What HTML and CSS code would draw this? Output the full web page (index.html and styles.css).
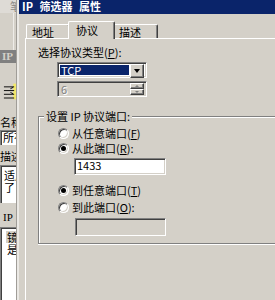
FILE: index.html
```html
<!DOCTYPE html>
<html>
<head>
<meta charset="utf-8">
<link rel="stylesheet" href="styles.css">
</head>
<body>
<div class="screen">
  <div class="bgwin">
    <div class="bg-top"><span class="bg-glyph">笔</span></div>
    <div class="bg-upper"></div>
    <div class="bg-title">IP</div>
    <div class="bg-body">
      <div class="bg-icon">
        <svg width="14" height="17" viewBox="0 0 14 17">
          <rect x="11" y="0" width="3" height="17" fill="#f2e96a"/>
          <path d="M1 3.5h11M1 7.5h11M1 11.5h11M1 15.5h11" stroke="#000" stroke-width="1"/>
          <path d="M8 5.5l3 -1.5M8 9.5l3 1.5" stroke="#000" stroke-width="1"/>
        </svg>
      </div>
      <div class="bg-label">名称</div>
      <div class="bg-field">所有</div>
      <div class="bg-label lbl2">描述</div>
      <div class="bg-area">适用<br>了</div>
      <div class="bg-label ip">IP</div>
      <div class="bg-list">
        <div class="bg-head">镜</div>
        <div class="bg-row">是</div>
      </div>
    </div>
  </div>
  <div class="edge"></div>
  <div class="dialog">
    <div class="titlebar">IP 筛选器 属性</div>
    <div class="dlg-body">
      <div class="tabs">
        <div class="tab t1">地址</div>
        <div class="tab sel">协议</div>
        <div class="tab t3">描述</div>
      </div>
      <div class="panel">
        <div class="label">选择协议类型(<u>P</u>):</div>
        <div class="combo">
          <div class="combo-sel">TCP</div>
          <div class="btn drop"><span class="tri"></span></div>
        </div>
        <div class="spin">
          <div class="spin-val">6</div>
          <div class="spin-btns">
            <div class="btn sb"><span class="tri-up"></span></div>
            <div class="btn sb"><span class="tri-dn"></span></div>
          </div>
        </div>
        <div class="group">
          <div class="group-title">设置 IP 协议端口:</div>
          <div class="radio-row r1"><span class="radio"></span><span>从任意端口(<u>F</u>)</span></div>
          <div class="radio-row"><span class="radio on"></span><span>从此端口(<u>R</u>):</span></div>
          <div class="field f1">1433</div>
          <div class="radio-row r3"><span class="radio on"></span><span>到任意端口(<u>T</u>)</span></div>
          <div class="radio-row r4"><span class="radio"></span><span>到此端口(<u>O</u>):</span></div>
          <div class="field f2"></div>
        </div>
      </div>
    </div>
  </div>
</div>
</body>
</html>
```

FILE: styles.css
```css
html {
  margin: 0;
  padding: 0;
  overflow: hidden;
}
body {
  margin: 0;
  padding: 0;
  width: 275px;
  height: 300px;
  overflow: hidden;
  background: #d4d0c8;
  font: 11px/13px "Noto Sans CJK SC", sans-serif;
  color: #000;
}
u { text-decoration: underline; text-underline-offset: 1px; }

.screen {
  display: flex;
  width: 275px;
  height: 300px;
  overflow: hidden;
}

/* background window */
.bgwin {
  width: 16px;
  flex: none;
  display: flex;
  flex-direction: column;
  overflow: hidden;
  background: #d4d0c8;
  white-space: nowrap;
}
.bg-top {
  height: 13px;
  background: #dedbd6;
  display: flex;
  overflow: hidden;
}
.bg-glyph {
  margin-left: 10px;
  color: #8c8a86;
  line-height: 13px;
}
.bg-upper {
  height: 37px;
  box-shadow: inset -2px 0 0 #d4d0c8, inset -3px 0 0 #eeece8;
}
.bg-title {
  height: 13px;
  background: #808080;
  color: #d4d0c8;
  font: bold 11px/13px "Liberation Serif", serif;
  padding-left: 2px;
}
.bg-body {
  flex: 1;
  display: flex;
  flex-direction: column;
}
.bg-icon {
  margin: 20px 0 0 3px;
  height: 17px;
  display: flex;
}
.bg-label {
  margin-top: 16px;
  overflow: hidden;
}
.bg-field {
  margin-top: 1px;
  height: 15px;
  box-sizing: border-box;
  background: #fff;
  border-top: 1px solid #808080;
  border-left: 1px solid #808080;
  box-shadow: inset 1px 1px 0 #404040;
  padding-left: 2px;
  line-height: 13px;
  overflow: hidden;
}
.lbl2 { margin-top: 5px; }
.bg-area {
  margin-top: 2px;
  height: 38px;
  box-sizing: border-box;
  background: #fff;
  border-top: 1px solid #808080;
  border-left: 1px solid #808080;
  box-shadow: inset 1px 1px 0 #404040;
  padding: 3px 0 0 3px;
  line-height: 12px;
  overflow: hidden;
}
.bg-label.ip {
  margin-top: 8px;
  font: 11px/13px "Liberation Serif", serif;
  padding-left: 3px;
}
.bg-list {
  margin-top: 3px;
  flex: 1;
  background: #fff;
  border-top: 1px solid #808080;
  border-left: 1px solid #808080;
  box-shadow: inset 1px 1px 0 #404040;
  padding: 2px 0 0 4px;
  display: flex;
  flex-direction: column;
  overflow: hidden;
}
.bg-head {
  height: 13px;
  flex: none;
  box-sizing: border-box;
  background: #d4d0c8;
  border-top: 1px solid #fff;
  border-left: 1px solid #fff;
  padding-left: 1px;
  line-height: 12px;
}
.bg-row {
  padding-left: 2px;
  line-height: 13px;
}

.edge {
  width: 2px;
  flex: none;
  border-left: 1px solid #a09d98;
  background: #ebe9e5;
}

/* dialog */
.dialog {
  flex: 1;
  min-width: 0;
  display: flex;
  flex-direction: column;
  background: #d4d0c8;
  overflow: hidden;
}
.titlebar {
  height: 14px;
  flex: none;
  background: #0a246a;
  color: #fff;
  font-weight: bold;
  line-height: 13px;
  padding-left: 3px;
  white-space: nowrap;
  word-spacing: 4px;
}
.dlg-body {
  flex: 1;
  display: flex;
  flex-direction: column;
  padding-left: 6px;
}
.tabs {
  height: 24px;
  flex: none;
  display: flex;
  align-items: flex-end;
  padding-left: 1px;
}
.tab {
  box-sizing: border-box;
  height: 14px;
  border-top: 1px solid #fff;
  border-left: 1px solid #fff;
  border-right: 1px solid #404040;
  box-shadow: inset -1px 0 0 #808080;
  border-radius: 2px 2px 0 0;
  line-height: 13px;
  padding-top: 1px;
  white-space: nowrap;
  background: #d4d0c8;
}
.t1 { width: 44px; padding-left: 5px; }
.t3 { width: 45px; padding-left: 5px; }
.tab.sel {
  width: 47px;
  height: 18px;
  margin: 0 -2px -1px -2px;
  padding-left: 7px;
  padding-top: 2px;
  position: relative;
  z-index: 1;
}
.panel {
  flex: 1;
  border-top: 1px solid #fff;
  border-left: 1px solid #fff;
  display: flex;
  flex-direction: column;
  align-items: flex-start;
}
.label {
  margin: 7px 0 0 12px;
  white-space: nowrap;
}

.combo, .spin, .field {
  box-sizing: border-box;
  border-top: 1px solid #808080;
  border-left: 1px solid #808080;
  border-bottom: 1px solid #fff;
  border-right: 1px solid #fff;
  box-shadow: inset 1px 1px 0 #404040, inset -1px -1px 0 #d4d0c8;
}
.combo {
  margin: 3px 0 0 31px;
  width: 90px;
  height: 16px;
  flex: none;
  background: #fff;
  padding: 2px;
  display: flex;
}
.combo-sel {
  flex: 1;
  background: #0a246a;
  color: #fff;
  line-height: 11px;
  padding-left: 1px;
  margin-right: 1px;
}
.btn {
  box-sizing: border-box;
  background: #d4d0c8;
  border-top: 1px solid #fff;
  border-left: 1px solid #fff;
  border-right: 1px solid #404040;
  border-bottom: 1px solid #404040;
  box-shadow: inset -1px -1px 0 #808080;
  display: flex;
  align-items: center;
  justify-content: center;
}
.drop {
  width: 14px;
  height: 14px;
  margin: -1px 0;
}
.tri {
  width: 0;
  height: 0;
  border-left: 3.5px solid transparent;
  border-right: 3.5px solid transparent;
  border-top: 4px solid #000;
}
.spin {
  margin: 3px 0 0 31px;
  width: 90px;
  height: 16px;
  flex: none;
  background: #d4d0c8;
  padding: 2px;
  display: flex;
}
.spin-val {
  flex: 1;
  color: #808080;
  text-shadow: 1px 1px 0 #fff;
  line-height: 11px;
  padding-left: 1px;
}
.spin-btns {
  width: 14px;
  display: flex;
  flex-direction: column;
  margin: -1px 0;
}
.sb {
  height: 7px;
}
.tri-up, .tri-dn {
  width: 0;
  height: 0;
  border-left: 2px solid transparent;
  border-right: 2px solid transparent;
}
.tri-up { border-bottom: 2px solid #808080; }
.tri-dn { border-top: 2px solid #808080; }

.group {
  margin: 19px 0 0 12px;
  width: 320px;
  flex: none;
  box-sizing: border-box;
  border: 1px solid #808080;
  border-right: none;
  box-shadow: inset 1px 1px 0 #fff, 0 1px 0 #fff;
  padding-bottom: 7px;
  display: flex;
  flex-direction: column;
  align-items: flex-start;
}
.group-title {
  margin: -7px 0 0 5px;
  padding: 0 2px;
  background: #d4d0c8;
  white-space: nowrap;
}
.radio-row {
  height: 15px;
  display: flex;
  align-items: center;
  gap: 3px;
  padding-left: 19px;
  white-space: nowrap;
}
.r1 { margin-top: 3px; }
.r3 { margin-top: 8px; }
.r4 { margin-top: 2px; }
.radio {
  box-sizing: border-box;
  width: 11px;
  height: 11px;
  flex: none;
  border-radius: 50%;
  background: #fff;
  border: 1px solid;
  border-color: #808080 #fff #fff #808080;
  box-shadow: inset 1px 1px 0 #404040, inset -1px -1px 0 #d4d0c8;
  display: flex;
  align-items: center;
  justify-content: center;
}
.radio.on::after {
  content: "";
  width: 5px;
  height: 5px;
  border-radius: 50%;
  background: #000;
}
.field {
  background: #fff;
  padding-left: 2px;
  line-height: 13px;
}
.f1 {
  margin: 2px 0 0 35px;
  width: 92px;
  height: 17px;
}
.f2 {
  margin: 3px 0 0 36px;
  width: 91px;
  height: 18px;
  background: #d4d0c8;
}
```
